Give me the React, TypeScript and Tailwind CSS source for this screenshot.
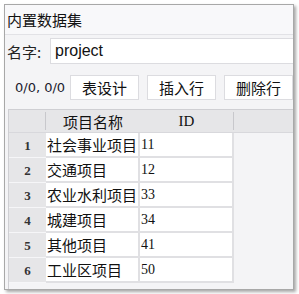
import React from "react";

const rows = [
  { n: "1", name: "社会事业项目", id: "11" },
  { n: "2", name: "交通项目", id: "12" },
  { n: "3", name: "农业水利项目", id: "33" },
  { n: "4", name: "城建项目", id: "34" },
  { n: "5", name: "其他项目", id: "41" },
  { n: "6", name: "工业区项目", id: "50" },
];

const cjk = { fontFamily: '"Noto Sans CJK SC", "Noto Sans", sans-serif' };
const serif = { fontFamily: '"Liberation Serif", "DejaVu Serif", serif' };

export default function App() {
  return (
    <div className="w-[299px] h-[294px] bg-white pl-[4px] pt-[4px] overflow-hidden">
      <div className="w-[290px] h-[286px] border border-[#a8a8a8] bg-[#f4f4f6] shadow-[2px_2px_3px_rgba(0,0,0,0.35)] overflow-hidden flex flex-col">
        <div className="h-[29px] flex items-center pl-[2px] text-[15px] text-[#111] leading-none bg-[#f8f8fa]" style={cjk}>
          内置数据集
        </div>
        <div className="h-[1px] bg-[#e2e2e6]" />
        <div className="mt-[3px] h-[26px] flex items-center">
          <span className="pl-[2px] w-[45px] text-[15px] text-[#222] leading-none" style={cjk}>名字:</span>
          <div className="flex-1 h-[26px] bg-white border border-[#dcdce0] border-r-0 flex items-center pl-[4px] text-[16px] text-[#111]" style={{ fontFamily: '"Liberation Sans", Arial, sans-serif' }}>
            project
          </div>
        </div>
        <div className="mt-[11px] h-[25px] flex items-center">
          <span className="pl-[10px] w-[68px] text-[13px] text-[#1a1a2e] leading-none" style={{ fontFamily: '"DejaVu Sans", sans-serif' }}>0/0, 0/0</span>
          <div className="flex gap-[8px]">
            {["表设计", "插入行", "删除行"].map((t) => (
              <div key={t} className="w-[69px] h-[25px] bg-white border border-[#dcdce0] flex items-center justify-center text-[15px] text-[#111] leading-none shrink-0" style={cjk}>
                {t}
              </div>
            ))}
          </div>
        </div>
        <div className="mt-[9px] ml-[3px] flex-1 border-l border-t border-[#cfcfd3] flex flex-col">
          <div className="h-[23px] bg-[#e6e6e8] flex items-center border-b border-[#d8d8dc]">
            <div className="w-[37px] h-full flex items-center justify-end">
              <div className="w-[1px] h-[18px] bg-[#c8c8cc]" />
            </div>
            <div className="w-[94px] text-center text-[15px] text-[#111] leading-none" style={cjk}>项目名称</div>
            <div className="w-[93px] text-center text-[15px] text-[#111] leading-none" style={serif}>ID</div>
            <div className="w-[1px] h-[18px] bg-[#c8c8cc]" />
          </div>
          {rows.map((r) => (
            <div key={r.n} className="h-[25px] flex">
              <div className="w-[37px] bg-[#e6e6e8] border-b border-[#f6f6f8] flex items-center justify-center text-[13px] font-bold text-[#333] leading-none" style={serif}>
                {r.n}
              </div>
              <div className="w-[94px] bg-white border-b-2 border-r-2 border-[#e0e0e3] flex items-center pl-[1px] text-[15px] text-[#111] leading-none" style={cjk}>
                {r.name}
              </div>
              <div className="w-[94px] bg-white border-b-2 border-r-2 border-[#e0e0e3] flex items-center pl-[1px] text-[14px] text-[#111] leading-none" style={serif}>
                {r.id}
              </div>
            </div>
          ))}
        </div>
      </div>
    </div>
  );
}
